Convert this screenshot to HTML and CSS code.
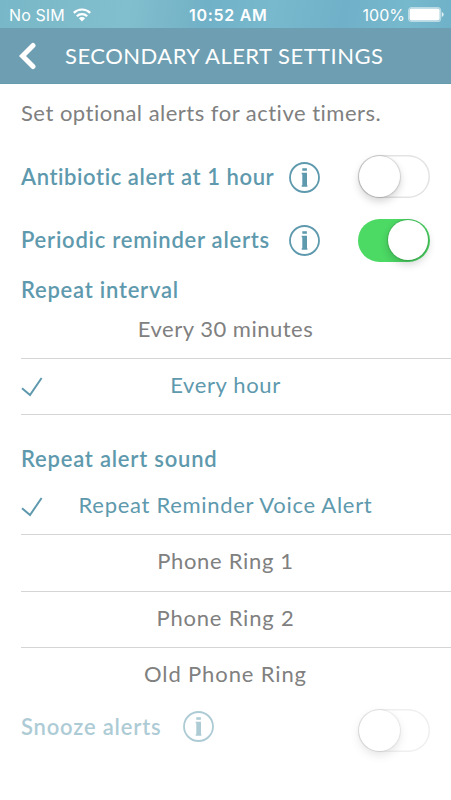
FILE: index.html
```
<!DOCTYPE html>
<html lang="en">
<head>
<meta charset="utf-8">
<title>Secondary Alert Settings</title>
<link rel="stylesheet" href="styles.css">
</head>
<body>
<svg width="0" height="0" class="defs">
  <symbol id="info" viewBox="0 0 31 31">
    <circle cx="15.5" cy="15.5" r="14.5" fill="none" stroke="currentColor" stroke-width="1.8"/>
    <path fill="currentColor" d="M13.300 6.200h4.600v2.600h-4.600zM12.700 10.800H18v12.500h.4v1.400h-5.700v-1.400h.6V12.200h-.6z"/>
  </symbol>
  <symbol id="check" viewBox="0 0 22 20">
    <path d="M1 11.2 9 18 20.6 1" fill="none" stroke="currentColor" stroke-width="2"/>
  </symbol>
</svg>
<div class="status">
  <span class="carrier">No SIM</span>
  <svg class="wifi" width="18" height="14" viewBox="0 0 18 14">
    <g fill="none" stroke="#fff" stroke-width="2.2"><path d="M.8 4.900a11.600 11.600 0 0 1 16.400 0"/><path d="M3.800 8.200a7.350 7.350 0 0 1 10.400 0"/></g>
    <path fill="#fff" d="M5.900 10.200a4.400 4.400 0 0 1 6.200 0L9 13.400z"/>
  </svg>
  <span class="clock">10:52 AM</span>
  <span class="percent">100%</span>
  <svg class="battery" width="36" height="15" viewBox="0 0 36 15">
    <rect x=".6" y=".6" width="32" height="13.8" rx="3" fill="none" stroke="#fff" stroke-opacity=".5" stroke-width="1.2"/>
    <rect x="1.500" y="1.500" width="30.200" height="12" rx="2" fill="#fff"/>
    <path d="M33.8 5a2.6 2.6 0 0 1 0 5z" fill="#fff" fill-opacity=".8"/>
  </svg>
</div>
<header class="bar">
  <svg class="back" width="18" height="28" viewBox="0 0 18 28"><path d="M14 3.5 3.500 14 14 24.500" fill="none" stroke="#fff" stroke-width="5" stroke-linecap="round"/></svg>
  <h1>SECONDARY ALERT SETTINGS</h1>
</header>
<main>
  <p class="intro">Set optional alerts for active timers.</p>
  <div class="setting">
    <span class="label antibiotic">Antibiotic alert at 1 hour</span>
    <svg class="info"><use href="#info"/></svg>
    <span class="toggle"><span class="knob"></span></span>
  </div>
  <div class="setting">
    <span class="label periodic">Periodic reminder alerts</span>
    <svg class="info"><use href="#info"/></svg>
    <span class="toggle on"><span class="knob"></span></span>
  </div>
  <h2>Repeat interval</h2>
  <ul>
    <li><span class="t30">Every 30 minutes</span></li>
    <li class="selected"><svg class="check"><use href="#check"/></svg><span class="thour">Every hour</span></li>
  </ul>
  <h2 class="sound">Repeat alert sound</h2>
  <ul>
    <li class="selected"><svg class="check"><use href="#check"/></svg><span class="tvoice">Repeat Reminder Voice Alert</span></li>
    <li><span class="tring">Phone Ring 1</span></li>
    <li><span class="tring two">Phone Ring 2</span></li>
    <li class="last"><span class="told">Old Phone Ring</span></li>
  </ul>
  <div class="setting disabled">
    <span class="label snooze">Snooze alerts</span>
    <svg class="info"><use href="#info"/></svg>
    <span class="toggle"><span class="knob"></span></span>
  </div>
</main>
</body>
</html>
```
FILE: styles.css
```
* { box-sizing: border-box; }
body { margin: 0; width: 451px; height: 800px; overflow: hidden; background: #fff; color: #808080; font: 400 22px/28px Lato, sans-serif; white-space: nowrap; }
h1, h2, p, ul { margin: 0; padding: 0; font-size: 22px; }
svg { display: block; flex: none; }
.defs { position: absolute; }
.status { height: 28px; display: grid; grid-template-columns: 64px 116px 96px 1fr auto; align-items: center; padding: 2px 7px 0 9px; color: #fff; font: 400 16px/26px Inter, sans-serif; background: linear-gradient(100deg, #78b7c7, #82bfce 28%, #75b3c7 42%, #70b1c8 46%, #78b9cd 60%, #70b1c9 76%, #76b8cc 90%, #6fb1c8); }
.carrier { letter-spacing: .1px; }
.clock { font-weight: 600; letter-spacing: .7px; }
.percent { text-align: right; padding-right: 3px; }
.battery { margin-bottom: 1px; }
.bar { height: 56px; display: flex; align-items: center; padding-left: 19px; color: #fff; background: #6e9eb1; border-bottom: 1px solid #659bad; }
h1 { margin-left: 28px; font-weight: 400; letter-spacing: .48px; }
.intro { height: 61px; padding: 15px 0 0 21px; letter-spacing: .49px; }
.setting { height: 63.500px; display: flex; align-items: center; padding: 0 21px; color: #5e99ad; }
.label, h2 { font-weight: 600; }
.label { flex: none; width: 268px; }
.antibiotic { letter-spacing: .58px; }
.periodic { letter-spacing: .74px; }
.snooze { letter-spacing: .81px; }
.info { width: 31px; height: 31px; margin-top: 1px; }
.toggle { width: 72px; height: 43px; margin-left: auto; padding: 1px; border-radius: 22px; box-shadow: inset 0 0 0 1.500px #e3e3e3; }
.knob { display: block; width: 41px; height: 41px; border-radius: 50%; background: #fff; box-shadow: 0 0 1px 1px rgba(0,0,0,.13), 0 4px 8px rgba(0,0,0,.18); }
.on { background: #4cd964; box-shadow: none; }
.on .knob { margin-left: 29px; width: 40px; height: 40px; }
h2 { height: 30.700px; padding: 4px 21px 0; color: #5e99ad; letter-spacing: .76px; }
.sound { height: 63.700px; padding-top: 30px; letter-spacing: .78px; }
ul { list-style: none; margin-left: 21px; }
li { height: 56.300px; display: grid; grid-template-columns: 40px 1fr 61px; align-items: center; padding-bottom: 3px; border-bottom: 1px solid #d5d5d5; }
li span { grid-column: 2; grid-row: 1; text-align: center; }
.last { border-color: transparent; }
.selected { color: #5e99ad; }
.check { width: 22px; height: 20px; margin-top: 4px; }
.t30 { letter-spacing: .5px; }
.thour { letter-spacing: .62px; }
.tvoice { letter-spacing: .7px; }
.tring { letter-spacing: .68px; }
.two { letter-spacing: .8px; }
.told { letter-spacing: .88px; }
.disabled { height: 54px; align-items: flex-start; padding-top: 7px; }
.disabled .label { width: 162px; padding-top: 2px; }
.disabled .label, .disabled .info { opacity: .5; }
.disabled .info { margin-top: 0; }
.disabled .toggle { opacity: .55; margin-top: -2px; }
```
